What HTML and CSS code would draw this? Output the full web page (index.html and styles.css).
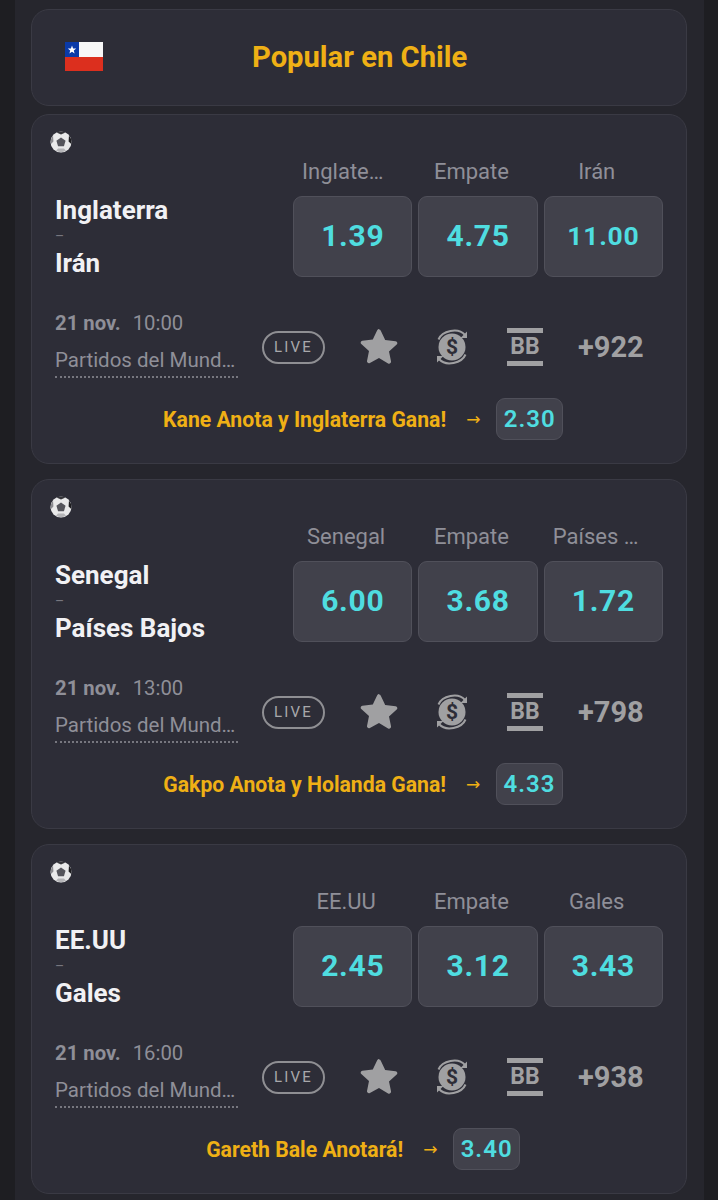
FILE: index.html
```html
<!DOCTYPE html>
<html lang="es">
<head>
<meta charset="utf-8">
<title>Popular en Chile</title>
<link rel="stylesheet" href="styles.css">
</head>
<body>
<svg class="defs" width="0" height="0" aria-hidden="true">
  <defs>
    <symbol id="ball" viewBox="0 0 22 22">
      <circle cx="11" cy="11" r="10.5" fill="#e9e9ea"/>
      <path d="M11 6.5l4.6 3.3-1.7 5.4H8.1L6.400 9.800z" fill="#55555c"/>
      <path d="M6.500 1.600A10.500 10.500 0 0 1 15.500 1.600L11 3.400z" fill="#35353a"/>
      <path d="M19 4.500A10.500 10.500 0 0 1 21.300 13L18.600 10.500z" fill="#1d1d20"/>
      <path d="M1 13A10.500 10.500 0 0 1 3 4.500L3.400 10.500z" fill="#8a8a8f"/>
      <path d="M6 19.800L8 17.400h6l2 2.400A10.500 10.500 0 0 1 6 19.800z" fill="#b5b5b8"/>
    </symbol>
    <symbol id="star" viewBox="0 0 38 36">
      <path d="M19 1.500c.8 0 1.400.5 1.800 1.300l4.400 9.600 10.400 1.300c1.700.2 2.300 2.200 1.100 3.300l-7.700 7.100 2 10.300c.3 1.700-1.400 2.900-2.900 2.100L19 31l-9.100 5c-1.500.8-3.200-.4-2.900-2.100l2-10.300-7.700-7.100c-1.200-1.100-.6-3.100 1.100-3.300l10.400-1.300 4.400-9.600c.4-.8 1-1.300 1.800-1.300z" fill="#a0a0a2" transform="translate(0 -1) scale(1 .97)"/>
    </symbol>
    <symbol id="money" viewBox="0 0 32 38">
      <circle cx="16" cy="19" r="13.500" fill="#a0a0a2"/>
      <text x="16" y="26" class="dollar">$</text>
      <path d="M2.500 11.500C6 3 22 -1 29 7" fill="none" stroke="#a0a0a2" stroke-width="2"/>
      <path d="M31 3.500v6.500h-6.500z" fill="#a0a0a2"/>
      <path d="M29.500 26.500C26 35 10 39 3 31" fill="none" stroke="#a0a0a2" stroke-width="2"/>
      <path d="M1 34.500V28h6.500z" fill="#a0a0a2"/>
    </symbol>
  </defs>
</svg>
<main class="panel">
  <header class="title-card">
    <svg class="flag" viewBox="0 0 38 29" role="img" aria-label="Chile">
      <rect width="38" height="29" fill="#dc2f1e"/>
      <rect width="38" height="15" fill="#f7f7f7"/>
      <rect width="14" height="15" fill="#0a3aa8"/>
      <path d="M7 3.500l1.100 2.900 3.100.1-2.400 1.900.8 3-2.600-1.700-2.600 1.700.8-3-2.400-1.900 3.100-.1z" fill="#fff"/>
    </svg>
    <h1 class="title">Popular en Chile</h1>
  </header>

  <article class="card">
    <svg class="ball"><use href="#ball"/></svg>
    <div class="main">
      <div class="teams"><span class="team">Inglaterra</span><span class="dash">–</span><span class="team">Irán</span></div>
      <div class="market">
        <div class="outcome"><span class="label label-cut">Inglate…</span><button class="odd">1.39</button></div>
        <div class="outcome"><span class="label">Empate</span><button class="odd">4.75</button></div>
        <div class="outcome"><span class="label">Irán</span><button class="odd odd-small">11.00</button></div>
      </div>
    </div>
    <div class="info">
      <div class="when"><div class="datetime"><b>21 nov.</b><span>10:00</span></div><div class="league">Partidos del Mund…</div></div>
      <span class="live">LIVE</span>
      <svg class="i-star"><use href="#star"/></svg>
      <svg class="i-money"><use href="#money"/></svg>
      <span class="bb">BB</span>
      <span class="more">+922</span>
    </div>
    <div class="promo"><span class="promo-text">Kane Anota y Inglaterra Gana!</span><span class="arrow">→</span><button class="promo-odd">2.30</button></div>
  </article>

  <article class="card">
    <svg class="ball"><use href="#ball"/></svg>
    <div class="main">
      <div class="teams"><span class="team">Senegal</span><span class="dash">–</span><span class="team">Países Bajos</span></div>
      <div class="market">
        <div class="outcome"><span class="label">Senegal</span><button class="odd">6.00</button></div>
        <div class="outcome"><span class="label">Empate</span><button class="odd">3.68</button></div>
        <div class="outcome"><span class="label label-cut">Países …</span><button class="odd">1.72</button></div>
      </div>
    </div>
    <div class="info">
      <div class="when"><div class="datetime"><b>21 nov.</b><span>13:00</span></div><div class="league">Partidos del Mund…</div></div>
      <span class="live">LIVE</span>
      <svg class="i-star"><use href="#star"/></svg>
      <svg class="i-money"><use href="#money"/></svg>
      <span class="bb">BB</span>
      <span class="more">+798</span>
    </div>
    <div class="promo"><span class="promo-text">Gakpo Anota y Holanda Gana!</span><span class="arrow">→</span><button class="promo-odd">4.33</button></div>
  </article>

  <article class="card">
    <svg class="ball"><use href="#ball"/></svg>
    <div class="main">
      <div class="teams"><span class="team">EE.UU</span><span class="dash">–</span><span class="team">Gales</span></div>
      <div class="market">
        <div class="outcome"><span class="label">EE.UU</span><button class="odd">2.45</button></div>
        <div class="outcome"><span class="label">Empate</span><button class="odd">3.12</button></div>
        <div class="outcome"><span class="label">Gales</span><button class="odd">3.43</button></div>
      </div>
    </div>
    <div class="info">
      <div class="when"><div class="datetime"><b>21 nov.</b><span>16:00</span></div><div class="league">Partidos del Mund…</div></div>
      <span class="live">LIVE</span>
      <svg class="i-star"><use href="#star"/></svg>
      <svg class="i-money"><use href="#money"/></svg>
      <span class="bb">BB</span>
      <span class="more">+938</span>
    </div>
    <div class="promo"><span class="promo-text">Gareth Bale Anotará!</span><span class="arrow">→</span><button class="promo-odd">3.40</button></div>
  </article>
</main>
</body>
</html>
```
FILE: styles.css
```css
* { box-sizing: border-box; }
html, body { margin: 0; height: 1200px; overflow: hidden; }
body { background: #1e1e22; font-family: Roboto, "Liberation Sans", sans-serif; }
.defs { position: absolute; }
.dollar { font: 700 21px Roboto, sans-serif; fill: #2d2d37; text-anchor: middle; }

.panel { width: 689px; height: 1200px; margin-left: 15px; padding: 9px 17px 0 16px; background: #26262d; }

.title-card, .card { width: 656px; background: #2d2d37; border: 1px solid #3a3a44; }
.title-card { height: 97px; border-radius: 18px; display: flex; align-items: center; margin-bottom: 8px; padding: 0 0 2px 33px; }
.flag { width: 38px; height: 29px; flex: none; }
.title { margin: 0 0 0 149px; font-size: 29.2px; font-weight: 700; line-height: 34px; color: #efb015; }

.card { height: 350px; margin-bottom: 15px; border-radius: 18px; padding: 16px 23px 0 23px; display: flex; flex-direction: column; }
.ball { width: 22px; height: 22px; margin-left: -5px; flex: none; display: block; }

.main { display: flex; justify-content: space-between; align-items: flex-end; height: 124px; }
.teams { display: flex; flex-direction: column; height: 81px; padding-bottom: 1px; justify-content: center; }
.team { font-size: 26px; font-weight: 700; line-height: 30px; color: #f1f1f4; }
.dash { font-size: 14px; line-height: 23px; color: #77777f; }
.market { display: flex; gap: 6px; }
.outcome { width: 119.300px; display: flex; flex-direction: column; }
.label { width: 88px; height: 26px; margin: 0 0 11px 9px; font-size: 22px; line-height: 26px; color: #8f8f98; text-align: center; white-space: nowrap; }
.label-cut { text-align: left; }
.odd { width: 100%; height: 81px; padding: 0 0 3px; border: 1px solid #50505a; border-radius: 9px; background: #41414b; color: #4fdde0; font: 700 30px Roboto, sans-serif; letter-spacing: .7px; }
.odd-small { padding-bottom: 2px; font-size: 26.500px; }

.info { display: flex; align-items: center; height: 74px; margin-top: 33px; }
.when { width: 183px; flex: none; align-self: flex-start; margin-top: 1px; }
.datetime { display: flex; gap: 12px; font-size: 20.300px; line-height: 24px; color: #8f8f98; }
.datetime b { font-weight: 700; }
.league { margin-top: 13px; height: 30px; font-size: 20.500px; line-height: 24px; color: #8f8f98; border-bottom: 2px dotted #77777f; white-space: nowrap; }
.live { width: 63px; height: 33px; margin-left: 24px; flex: none; border: 2px solid #8f8f93; border-radius: 17px; color: #a8a8ab; font-size: 15px; letter-spacing: 2.200px; line-height: 29px; text-align: center; }
.i-star { width: 38px; height: 36px; margin-left: 35px; flex: none; }
.i-money { width: 32px; height: 38px; margin-left: 38px; flex: none; }
.bb { width: 36px; height: 38px; margin-left: 39px; flex: none; border-top: 5px solid #a0a0a2; border-bottom: 5px solid #a0a0a2; color: #a0a0a2; font-size: 23px; font-weight: 700; line-height: 27px; text-align: center; }
.more { margin-left: 35px; font-size: 29px; font-weight: 700; color: #a0a0a2; }

.promo { display: flex; align-items: center; justify-content: center; height: 42px; margin-top: 14px; padding-left: 8px; }
.promo-text { font-size: 21.200px; font-weight: 700; color: #efb015; white-space: nowrap; }
.arrow { margin-left: 20px; margin-right: 16px; font-size: 17px; color: #efb015; font-family: "DejaVu Sans", sans-serif; }
.promo-odd { height: 42px; width: 66.500px; padding: 0; border: 1px solid #50505a; border-radius: 9px; background: #41414b; color: #4fdde0; font: 600 24px Roboto, sans-serif; letter-spacing: 1px; }
```
